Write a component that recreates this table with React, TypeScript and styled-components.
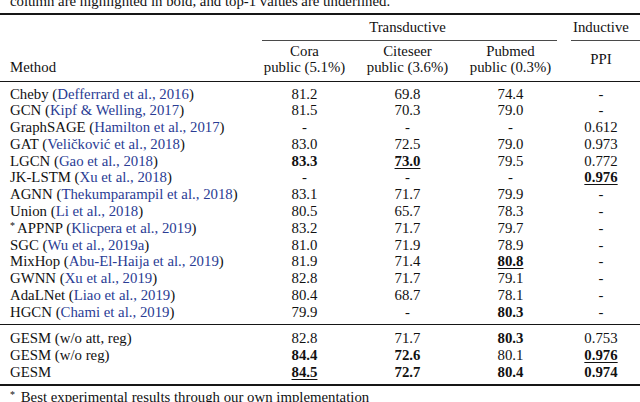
import React from "react";
import styled, { createGlobalStyle } from "styled-components";

const Global = createGlobalStyle`
  html, body { margin: 0; padding: 0; background: #ffffff; overflow: hidden; }
  #root { width: 640px; height: 402px; overflow: hidden; }
`;

const COLS = "253px 103px 103px 103px 78px";
const LINE = 16.77;

const Page = styled.div`
  width: 640px;
  font-family: "Liberation Serif", "Times New Roman", serif;
  font-size: 14.8px;
  line-height: ${LINE}px;
  color: #111;
`;

const Caption = styled.div`
  margin-top: -6.7px;
  padding-left: 10px;
  white-space: nowrap;
`;

const Rule = styled.div<{ $thick?: boolean; $gapTop: number }>`
  height: ${(p) => (p.$thick ? 2 : 1)}px;
  background: #161616;
  margin-top: ${(p) => p.$gapTop}px;
`;

const Header = styled.div`
  display: grid;
  grid-template-columns: ${COLS};
  grid-template-rows: auto auto auto;
  padding-top: 3.6px;
  padding-bottom: 5px;
`;

const MethodHead = styled.div`
  grid-column: 1;
  grid-row: 1 / 4;
  align-self: end;
  padding-left: 10px;
  padding-bottom: 0.5px;
`;

const GroupLabel = styled.div<{ $col: string }>`
  grid-column: ${(p) => p.$col};
  grid-row: 1;
  text-align: center;
`;

const GroupRule = styled.div<{ $col: string; $trimL: number; $trimR: number }>`
  grid-column: ${(p) => p.$col};
  grid-row: 2;
  height: 1px;
  margin: 4.6px ${(p) => p.$trimR}px 0 ${(p) => p.$trimL}px;
  background: #4a4a4a;
`;

const SubLabel = styled.div<{ $col: number }>`
  grid-column: ${(p) => p.$col};
  grid-row: 3;
  padding-top: 1.5px;
  text-align: center;
  align-self: center;
  white-space: nowrap;
`;

const Body = styled.div<{ $top: number }>`
  padding-top: ${(p) => p.$top}px;
`;

const Row = styled.div`
  display: grid;
  grid-template-columns: ${COLS};
  height: ${LINE}px;
`;

const MethodCell = styled.div`
  padding-left: 10px;
  white-space: nowrap;
`;

const Cite = styled.span`
  color: #2a3c94;
`;

const Star = styled.sup`
  font-size: 10px;
  line-height: 0;
  vertical-align: 4px;
  margin-right: 2px;
`;

const ValueCell = styled.div<{ $bold?: boolean; $under?: boolean }>`
  text-align: center;
  font-weight: ${(p) => (p.$bold ? 700 : 400)};
  text-decoration: ${(p) => (p.$under ? "underline" : "none")};
  text-decoration-thickness: 1px;
  text-underline-offset: 2px;
`;

const Footnote = styled.div`
  padding-left: 10px;
  margin-top: 2.6px;
  white-space: nowrap;
`;

type Val = string | { v: string; b?: boolean; u?: boolean };

type Entry = { name: string; cite?: string; star?: boolean; vals: Val[] };

const baselines: Entry[] = [
  { name: "Cheby", cite: "Defferrard et al., 2016", vals: ["81.2", "69.8", "74.4", "-"] },
  { name: "GCN", cite: "Kipf & Welling, 2017", vals: ["81.5", "70.3", "79.0", "-"] },
  { name: "GraphSAGE", cite: "Hamilton et al., 2017", vals: ["-", "-", "-", "0.612"] },
  { name: "GAT", cite: "Veličković et al., 2018", vals: ["83.0", "72.5", "79.0", "0.973"] },
  {
    name: "LGCN",
    cite: "Gao et al., 2018",
    vals: [{ v: "83.3", b: true }, { v: "73.0", b: true, u: true }, "79.5", "0.772"],
  },
  { name: "JK-LSTM", cite: "Xu et al., 2018", vals: ["-", "-", "-", { v: "0.976", b: true, u: true }] },
  { name: "AGNN", cite: "Thekumparampil et al., 2018", vals: ["83.1", "71.7", "79.9", "-"] },
  { name: "Union", cite: "Li et al., 2018", vals: ["80.5", "65.7", "78.3", "-"] },
  { name: "APPNP", star: true, cite: "Klicpera et al., 2019", vals: ["83.2", "71.7", "79.7", "-"] },
  { name: "SGC", cite: "Wu et al., 2019a", vals: ["81.0", "71.9", "78.9", "-"] },
  {
    name: "MixHop",
    cite: "Abu-El-Haija et al., 2019",
    vals: ["81.9", "71.4", { v: "80.8", b: true, u: true }, "-"],
  },
  { name: "GWNN", cite: "Xu et al., 2019", vals: ["82.8", "71.7", "79.1", "-"] },
  { name: "AdaLNet", cite: "Liao et al., 2019", vals: ["80.4", "68.7", "78.1", "-"] },
  { name: "HGCN", cite: "Chami et al., 2019", vals: ["79.9", "-", { v: "80.3", b: true }, "-"] },
];

const ours: Entry[] = [
  { name: "GESM (w/o att, reg)", vals: ["82.8", "71.7", { v: "80.3", b: true }, "0.753"] },
  {
    name: "GESM (w/o reg)",
    vals: [{ v: "84.4", b: true }, { v: "72.6", b: true }, "80.1", { v: "0.976", b: true, u: true }],
  },
  {
    name: "GESM",
    vals: [
      { v: "84.5", b: true, u: true },
      { v: "72.7", b: true },
      { v: "80.4", b: true },
      { v: "0.974", b: true },
    ],
  },
];

function TableRow({ e }: { e: Entry }) {
  return (
    <Row>
      <MethodCell>
        {e.star && <Star>*</Star>}
        {e.name}
        {e.cite && (
          <>
            {" ("}
            <Cite>{e.cite}</Cite>
            {")"}
          </>
        )}
      </MethodCell>
      {e.vals.map((v, i) =>
        typeof v === "string" ? (
          <ValueCell key={i}>{v}</ValueCell>
        ) : (
          <ValueCell key={i} $bold={v.b} $under={v.u}>
            {v.v}
          </ValueCell>
        )
      )}
    </Row>
  );
}

export default function App() {
  return (
    <Page>
      <Global />
      <Caption>column are highlighted in bold, and top-1 values are underlined.</Caption>
      <Rule $thick $gapTop={3} />
      <Header>
        <MethodHead>Method</MethodHead>
        <GroupLabel $col="2 / 5">Transductive</GroupLabel>
        <GroupLabel $col="5">Inductive</GroupLabel>
        <GroupRule $col="2 / 5" $trimL={9} $trimR={5} />
        <GroupRule $col="5" $trimL={9} $trimR={0} />
        <SubLabel $col={2}>
          Cora
          <br />
          public (5.1%)
        </SubLabel>
        <SubLabel $col={3}>
          Citeseer
          <br />
          public (3.6%)
        </SubLabel>
        <SubLabel $col={4}>
          Pubmed
          <br />
          public (0.3%)
        </SubLabel>
        <SubLabel $col={5}>PPI</SubLabel>
      </Header>
      <Rule $gapTop={0} />
      <Body $top={3.6}>
        {baselines.map((e) => (
          <TableRow key={e.name} e={e} />
        ))}
      </Body>
      <Rule $gapTop={3.6} />
      <Body $top={5}>
        {ours.map((e) => (
          <TableRow key={e.name} e={e} />
        ))}
      </Body>
      <Rule $thick $gapTop={3.7} />
      <Footnote>
        <Star>*</Star> Best experimental results through our own implementation
      </Footnote>
    </Page>
  );
}
